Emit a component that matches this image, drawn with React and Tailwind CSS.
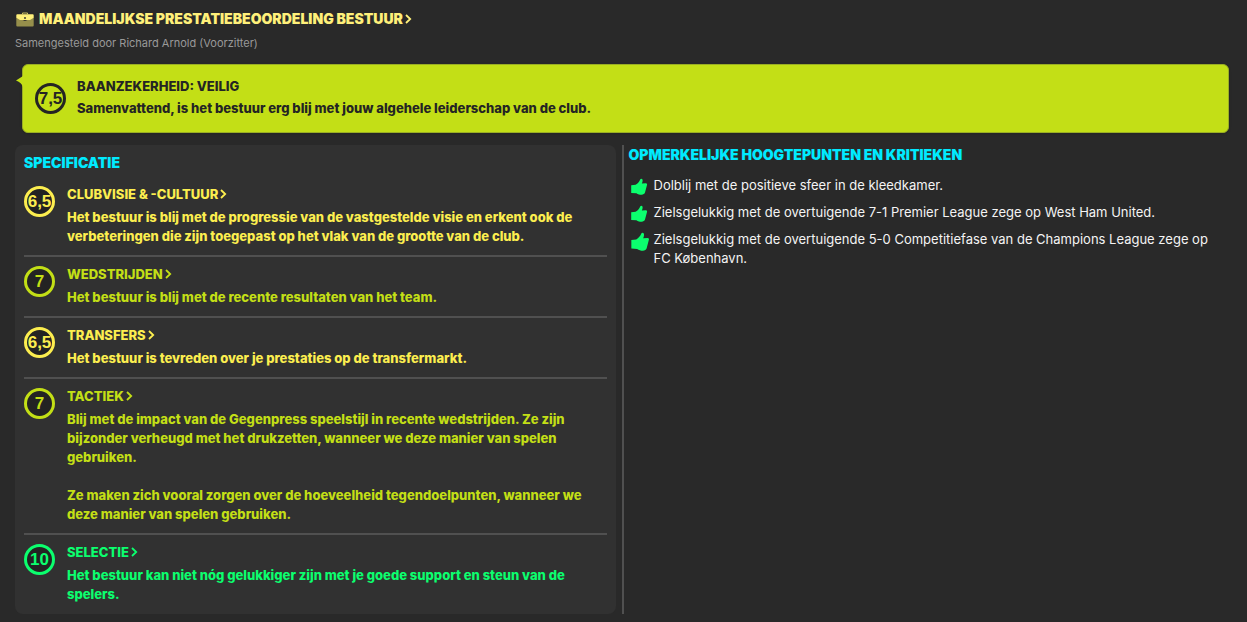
import React from "react";

const TONES = {
  yellow: "text-[#fcee4f]",
  lime: "text-[#c3df16]",
  green: "text-[#0bff6e]",
};

const SPECS = [
  {
    score: "6,5",
    tone: "yellow",
    title: "CLUBVISIE & -CULTUUR",
    text: ["Het bestuur is blij met de progressie van de vastgestelde visie en erkent ook de verbeteringen die zijn toegepast op het vlak van de grootte van de club."],
  },
  {
    score: "7",
    tone: "lime",
    title: "WEDSTRIJDEN",
    text: ["Het bestuur is blij met de recente resultaten van het team."],
  },
  {
    score: "6,5",
    tone: "yellow",
    title: "TRANSFERS",
    text: ["Het bestuur is tevreden over je prestaties op de transfermarkt."],
  },
  {
    score: "7",
    tone: "lime",
    title: "TACTIEK",
    text: [
      "Blij met de impact van de Gegenpress speelstijl in recente wedstrijden. Ze zijn bijzonder verheugd met het drukzetten, wanneer we deze manier van spelen gebruiken.",
      "Ze maken zich vooral zorgen over de hoeveelheid tegendoelpunten, wanneer we deze manier van spelen gebruiken.",
    ],
  },
  {
    score: "10",
    tone: "green",
    title: "SELECTIE",
    text: ["Het bestuur kan niet nóg gelukkiger zijn met je goede support en steun van de spelers."],
  },
];

const HIGHLIGHTS = [
  { text: "Dolblij met de positieve sfeer in de kleedkamer.", icon: "size-[18px]" },
  { text: "Zielsgelukkig met de overtuigende 7-1 Premier League zege op West Ham United.", icon: "size-[18px]" },
  {
    text: "Zielsgelukkig met de overtuigende 5-0 Competitiefase van de Champions League zege op FC København.",
    icon: "size-5",
  },
];

function Chevron() {
  return (
    <svg viewBox="0 0 7 10" className="w-[7px] h-[10px] shrink-0" fill="none" stroke="currentColor" strokeWidth="1.8" aria-hidden="true">
      <path d="M1 1l4.2 4L1 9" />
    </svg>
  );
}

function Briefcase() {
  return (
    <svg viewBox="0 0 18 15" className="w-[18px] h-[15px] shrink-0" aria-hidden="true">
      <path d="M0.3 5.5L9 9l8.7-3.5V13.4a1 1 0 0 1-1 1H1.3a1 1 0 0 1-1-1z" fill="#968f4b" />
      <path d="M1.3 2.2h15.4a1 1 0 0 1 1 1v2.6L14 8H4L0.3 5.8V3.2a1 1 0 0 1 1-1z" fill="#fff07a" />
      <path d="M6.5 2.5V1h5v1.5" fill="none" stroke="#cfc464" strokeWidth="1" />
      <circle cx="9" cy="6" r="0.9" fill="#2a2a2a" />
    </svg>
  );
}

function ThumbUp({ className }) {
  return (
    <svg viewBox="0 0 18 18" className={`shrink-0 mt-0.5 -mb-1 text-[#0bff6e] ${className}`} fill="currentColor" aria-hidden="true">
      <path d="M1.2 7.3L5.6 6.7C7.8 5.4 9.4 3.6 10.2 1.4 10.6.5 12.1.5 12.5 1.6 12.8 2.9 12.5 4.4 11.8 5.6L15.9 5.3C16.9 5.3 17.3 6.1 17 6.9L15 14.6C14.6 16 13 16.9 11.4 16.8 9.8 16.8 8 16.2 6.4 15.2L1.2 14.9Z" />
    </svg>
  );
}

function Score({ value, className }) {
  return (
    <div className={`size-[31px] shrink-0 rounded-full border-[3px] border-current flex items-center justify-center font-['Liberation_Sans',sans-serif] font-bold text-[17px] leading-none ${className}`}>
      {value}
    </div>
  );
}

function SpecItem({ spec }) {
  return (
    <li className={`flex gap-3 pt-[7px] pb-[9px] border-b-2 border-[#505050] last:border-b-0 ${TONES[spec.tone]}`}>
      <Score value={spec.score} className="bg-[#232323] mt-0.5" />
      <div className="flex-1 min-w-0">
        <h3 className="text-[13px] leading-5 font-extrabold">
          <a href="#" className="inline-flex items-center gap-0.5">
            {spec.title}
            <Chevron />
          </a>
        </h3>
        <div className="mt-1 flex flex-col gap-[19px] text-[13px] leading-[19px] font-extrabold">
          {spec.text.map(t => <p key={t}>{t}</p>)}
        </div>
      </div>
    </li>
  );
}

export default function App() {
  return (
    <main className="min-h-screen bg-[#292929] font-['Inter',sans-serif] pl-[15px] pr-[18px] pt-[9px] pb-2">
      <header>
        <h1 className="text-sm leading-5 font-black text-[#fff07a]">
          <a href="#" className="inline-flex items-center gap-0.5">
            <span className="w-[22px] pl-px flex"><Briefcase /></span>
            MAANDELIJKSE PRESTATIEBEOORDELING BESTUUR
            <Chevron />
          </a>
        </h1>
        <p className="mt-[3px] text-[11px] leading-4 text-[#999999]">Samengesteld door Richard Arnold (Voorzitter)</p>
      </header>

      <section className="relative mt-[13px] ml-[7px] flex items-start gap-[11px] rounded-md border border-[#9aae24] bg-[#c3df16] px-3 pt-2.5 pb-[13px] text-[#242424] shadow">
        <svg viewBox="0 0 7 12" className="absolute -left-[7px] top-[10px] w-[7px] h-3" aria-hidden="true">
          <path d="M0 5.5L7 1v11C6 9 4 7 0 5.5z" fill="#c3df16" />
        </svg>
        <Score value="7,5" className="mt-2" />
        <div className="text-[13px] leading-[22px] font-extrabold">
          <h2>BAANZEKERHEID: VEILIG</h2>
          <p>Samenvattend, is het bestuur erg blij met jouw algehele leiderschap van de club.</p>
        </div>
      </section>

      <div className="mt-3 grid grid-cols-[minmax(0,1fr)_auto_minmax(0,1fr)]">
        <section className="rounded-lg bg-[#313131] pt-[6px] px-[9px]">
          <h2 className="text-sm leading-6 font-black text-[#00eaff]">SPECIFICATIE</h2>
          <ul className="mt-0.5 pb-px">
            {SPECS.map(s => <SpecItem key={s.title} spec={s} />)}
          </ul>
        </section>
        <div className="w-0.5 ml-1.5 mr-[5px] bg-[#505050]" />
        <section>
          <h2 className="text-sm leading-5 font-black text-[#00eaff]">OPMERKELIJKE HOOGTEPUNTEN EN KRITIEKEN</h2>
          <ul className="mt-[11px] pr-4 flex flex-col gap-2 text-[13px] leading-[19px] text-[#f4f4f4]">
            {HIGHLIGHTS.map(h => (
              <li key={h.text} className="flex items-start pl-px">
                <span className="w-6 shrink-0 flex"><ThumbUp className={h.icon} /></span>
                <p>{h.text}</p>
              </li>
            ))}
          </ul>
        </section>
      </div>
    </main>
  );
}
